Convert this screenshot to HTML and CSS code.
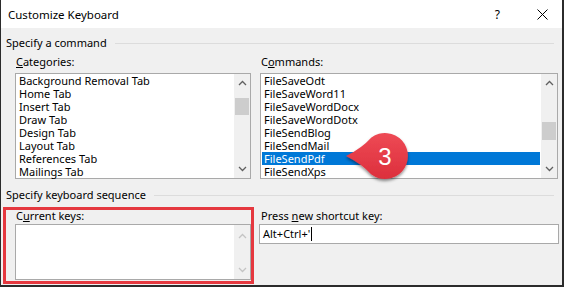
FILE: index.html
```html
<!DOCTYPE html>
<html>
<head>
<meta charset="utf-8">
<link rel="stylesheet" href="styles.css">
</head>
<body>
<div class="dialog">
  <div class="titlebar">
    <span class="title">Customize Keyboard</span>
    <div class="title-btns">
      <span class="help">?</span>
      <svg class="close" width="11" height="11" viewBox="0 0 11 11"><path d="M0.5 0.5 L10.5 10.5 M10.5 0.5 L0.5 10.5" stroke="#000" stroke-width="1" fill="none"/></svg>
    </div>
  </div>
  <div class="content">
    <div class="group-head"><span>Specify a command</span><div class="rule"></div></div>
    <div class="cmd-row">
      <div class="col col-left">
        <div class="label"><u>C</u>ategories:</div>
        <div class="listbox">
          <div class="items">
            <div class="item">Background Removal Tab</div>
            <div class="item">Home Tab</div>
            <div class="item">Insert Tab</div>
            <div class="item">Draw Tab</div>
            <div class="item">Design Tab</div>
            <div class="item">Layout Tab</div>
            <div class="item">References Tab</div>
            <div class="item">Mailings Tab</div>
          </div>
          <div class="scrollbar">
            <svg class="arrow" width="9" height="6" viewBox="0 0 9 6"><path d="M1 5 L4.5 1.5 L8 5" stroke="#606060" stroke-width="1.3" fill="none"/></svg>
            <div class="track"><div class="thumb thumb-cat"></div></div>
            <svg class="arrow" width="9" height="6" viewBox="0 0 9 6"><path d="M1 1 L4.5 4.5 L8 1" stroke="#606060" stroke-width="1.3" fill="none"/></svg>
          </div>
        </div>
      </div>
      <div class="col col-right">
        <div class="label">C<u>o</u>mmands:</div>
        <div class="listbox">
          <div class="items">
            <div class="item">FileSaveOdt</div>
            <div class="item">FileSaveWord11</div>
            <div class="item">FileSaveWordDocx</div>
            <div class="item">FileSaveWordDotx</div>
            <div class="item">FileSendBlog</div>
            <div class="item">FileSendMail</div>
            <div class="item selected">FileSendPdf</div>
            <div class="item">FileSendXps</div>
          </div>
          <div class="scrollbar">
            <svg class="arrow" width="9" height="6" viewBox="0 0 9 6"><path d="M1 5 L4.5 1.5 L8 5" stroke="#606060" stroke-width="1.3" fill="none"/></svg>
            <div class="track"><div class="thumb thumb-cmd"></div></div>
            <svg class="arrow" width="9" height="6" viewBox="0 0 9 6"><path d="M1 1 L4.5 4.5 L8 1" stroke="#606060" stroke-width="1.3" fill="none"/></svg>
          </div>
        </div>
      </div>
    </div>
    <div class="group-head group-head-2"><span>Specify keyboard sequence</span><div class="rule"></div></div>
    <div class="key-row">
      <div class="highlight">
        <div class="label label-keys">C<u>u</u>rrent keys:</div>
        <div class="listbox keys-box">
          <div class="items"></div>
          <div class="scrollbar scrollbar-disabled">
            <svg class="arrow" width="9" height="6" viewBox="0 0 9 6"><path d="M1 5 L4.5 1.5 L8 5" stroke="#c4c4c4" stroke-width="1.3" fill="none"/></svg>
            <div class="track"></div>
            <svg class="arrow" width="9" height="6" viewBox="0 0 9 6"><path d="M1 1 L4.5 4.5 L8 1" stroke="#c4c4c4" stroke-width="1.3" fill="none"/></svg>
          </div>
        </div>
      </div>
      <div class="col col-press">
        <div class="label label-keys">Press <u>n</u>ew shortcut key:</div>
        <div class="input">Alt+Ctrl+'<span class="caret"></span></div>
      </div>
    </div>
  </div>
  <svg class="callout" width="76" height="62" viewBox="0 0 76 62">
    <defs>
      <filter id="sh" x="-20%" y="-20%" width="140%" height="150%">
        <feDropShadow dx="0" dy="2" stdDeviation="1.6" flood-color="#000" flood-opacity="0.45"/>
      </filter>
      <linearGradient id="rg" x1="0" y1="0" x2="0" y2="1">
        <stop offset="0" stop-color="#ee4a55"/>
        <stop offset="1" stop-color="#dc2f3c"/>
      </linearGradient>
    </defs>
    <path d="M5 29 Q21 21 30.4 10.4 A23 23 0 1 1 30.4 47.6 Q21 37 5 29 Z" fill="url(#rg)" filter="url(#sh)"/>
    <text x="44" y="37.5" text-anchor="middle" class="callout-num">3</text>
  </svg>
</div>
</body>
</html>
```
FILE: styles.css
```css
* { box-sizing: border-box; }
html, body { margin: 0; padding: 0; background: #fff; }
body {
  font-family: "Noto Sans", "Open Sans", sans-serif;
  font-size: 11px;
  color: #000;
}
.dialog {
  position: relative;
  width: 564px;
  height: 287px;
  background: #f0f0f0;
  border-left: 1px solid #2b2b2b;
  border-right: 2px solid #2b2b2b;
  border-bottom: 2px solid #2b2b2b;
  overflow: hidden;
}
.titlebar {
  height: 28px;
  background: #fff;
  display: flex;
  align-items: center;
  justify-content: space-between;
  padding-left: 7px;
}
.title { font-size: 11.5px; line-height: 14px; padding-top: 1px; }
.title-btns { display: flex; align-items: center; height: 100%; }
.help { font-size: 12px; margin-right: 37px; padding-top: 1px; }
.close { margin-right: 14px; display: block; }
.content { padding-top: 8px; }
.group-head {
  display: flex;
  align-items: center;
  height: 14px;
  line-height: 14px;
  padding-left: 5px;
  padding-right: 8px;
}
.group-head span { white-space: nowrap; }
.rule { flex: 1; height: 1px; background: #dcdcdc; margin-left: 8px; margin-top: 1px; }
.cmd-row { display: flex; padding-left: 14px; margin-top: 5px; }
.col-left { width: 236px; }
.col-right { width: 298px; margin-left: 9px; }
.label { line-height: 14px; height: 14px; padding-left: 1px; margin-bottom: 4px; }
.listbox {
  display: flex;
  height: 106px;
  background: #fff;
  border: 1px solid #a9a9a9;
}
.items { flex: 1; padding: 0 0 0 3px; }
.item { height: 13px; line-height: 13px; white-space: nowrap; }
.col-right .items { padding-left: 1px; }
.col-right .item { padding-left: 2px; }
.item.selected { background: #0078d7; color: #fff; }
.scrollbar {
  width: 17px;
  background: #f0f0f0;
  display: flex;
  flex-direction: column;
  align-items: center;
  border-left: 1px solid #fff;
}
.arrow { display: block; margin: 6px 0; }
.track { flex: 1; width: 100%; position: relative; }
.thumb { position: absolute; left: 1px; right: 1px; background: #cdcdcd; }
.thumb-cat { top: 6px; height: 17px; }
.thumb-cmd { top: 30px; height: 18px; }
.group-head-2 { margin-top: 9px; }
.key-row { display: flex; align-items: flex-start; margin-top: 5px; }
.highlight {
  margin-left: 2px;
  width: 251px;
  height: 77px;
  border: 3px solid #e5383f;
  padding-left: 9px;
}
.label-keys { margin-bottom: 2px; line-height: 12px; height: 12px; margin-top: 0; }
.keys-box { height: 56px; width: 236px; }
.scrollbar-disabled .arrow { margin: 8px 0 6px; }
.col-press { margin-left: 5px; margin-top: 3px; width: 300px; }
.col-press .label { padding-left: 2px; }
.input {
  height: 20px;
  background: #fff;
  border: 1px solid #a9a9a9;
  padding-left: 3px;
  line-height: 18px;
  display: flex;
  align-items: center;
}
.caret { display: inline-block; width: 1px; height: 14px; background: #000; margin-left: 1px; }
.callout { position: absolute; left: 340px; top: 127px; overflow: visible; }
.callout-num { font-family: "Liberation Sans", Arial, sans-serif; font-size: 24px; fill: #fff; }
```
